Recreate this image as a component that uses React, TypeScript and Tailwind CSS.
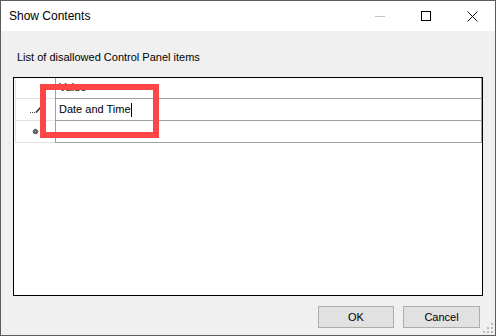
import React from "react";

const font = { fontFamily: '"Segoe UI", "Liberation Sans", Arial, sans-serif' };

function CaptionButtons() {
  return (
    <div className="flex h-full">
      <div className="w-[46px] h-full flex items-center justify-center">
        <div className="w-[10px] h-px bg-[#c4c4c4]" />
      </div>
      <div className="w-[46px] h-full flex items-center justify-center">
        <div className="w-[10px] h-[10px] border border-black" />
      </div>
      <div className="w-[46px] h-full flex items-center justify-center">
        <svg width="11" height="11" viewBox="0 0 11 11">
          <path d="M0.5 0.5 L10.5 10.5 M10.5 0.5 L0.5 10.5" stroke="#111" strokeWidth="1" />
        </svg>
      </div>
    </div>
  );
}

function EditGlyph() {
  return (
    <svg width="12" height="8" viewBox="0 0 12 8">
      <rect x="0" y="6" width="1" height="1" fill="#444" />
      <rect x="2" y="6" width="1" height="1" fill="#444" />
      <rect x="4" y="6" width="1" height="1" fill="#444" />
      <path d="M6 6.5 L10.5 1.5" stroke="#333" strokeWidth="1.6" />
    </svg>
  );
}

function NewRowGlyph() {
  return (
    <svg width="7" height="7" viewBox="0 0 7 7">
      <circle cx="3.5" cy="3.5" r="2.6" fill="#555" />
      <path d="M3.5 0.5 V6.5 M0.5 3.5 H6.5" stroke="#777" strokeWidth="0.8" />
    </svg>
  );
}

function Row({ glyph, children }: { glyph?: React.ReactNode; children?: React.ReactNode }) {
  return (
    <div className="flex h-[22px]">
      <div className="w-[40px] ml-px border-l border-b border-[#e3e3e3] flex items-center justify-center">
        {glyph}
      </div>
      <div className="flex-1 border-l border-b border-r border-[#a0a0a0] flex items-center pl-[3px] text-[11px] text-black">
        {children}
      </div>
    </div>
  );
}

export default function App() {
  return (
    <div
      className="w-[496px] h-[336px] border border-[#5c5c5c] bg-[#f0f0f0] flex flex-col"
      style={font}
    >
      <div className="h-[30px] bg-white flex items-center justify-between">
        <span className="pl-[8px] text-[12px] text-black">Show Contents</span>
        <CaptionButtons />
      </div>

      <div className="flex-1 flex flex-col relative">
        <p className="pl-[16px] pt-[19px] text-[11px] leading-[14px] text-black">
          List of disallowed Control Panel items
        </p>

        <div className="mt-[13px] ml-[12px] w-[470px] h-[219px] border border-black bg-white">
          <div className="flex h-[21px]">
            <div className="w-[40px] ml-px border-l border-b border-[#e3e3e3]" />
            <div className="flex-1 border-l border-b border-r border-[#a0a0a0] pl-[3px] text-[11px] leading-[18px] text-black">
              Value
            </div>
          </div>
          <Row glyph={<EditGlyph />}>
            <span>Date and Time</span>
            <span className="inline-block w-px h-[14px] bg-black" />
          </Row>
          <Row glyph={<NewRowGlyph />} />
        </div>

        <div className="absolute left-[39px] top-[53px] w-[119px] h-[54px] border-[6px] border-[#fe4646]" />

        <div className="flex justify-end gap-[9px] mt-[10px] pr-[15px]">
          <button className="w-[76px] h-[22px] bg-[#e1e1e1] border border-[#adadad] text-[11px] text-black">
            OK
          </button>
          <button className="w-[77px] h-[22px] bg-[#e1e1e1] border border-[#adadad] text-[11px] text-black">
            Cancel
          </button>
        </div>

        <svg className="absolute right-[2px] bottom-[2px]" width="10" height="10" viewBox="0 0 10 10">
          <rect x="8" y="0" width="2" height="2" fill="#bcbcbc" />
          <rect x="4" y="4" width="2" height="2" fill="#bcbcbc" />
          <rect x="8" y="4" width="2" height="2" fill="#bcbcbc" />
          <rect x="0" y="8" width="2" height="2" fill="#bcbcbc" />
          <rect x="4" y="8" width="2" height="2" fill="#bcbcbc" />
          <rect x="8" y="8" width="2" height="2" fill="#bcbcbc" />
        </svg>
      </div>
    </div>
  );
}
